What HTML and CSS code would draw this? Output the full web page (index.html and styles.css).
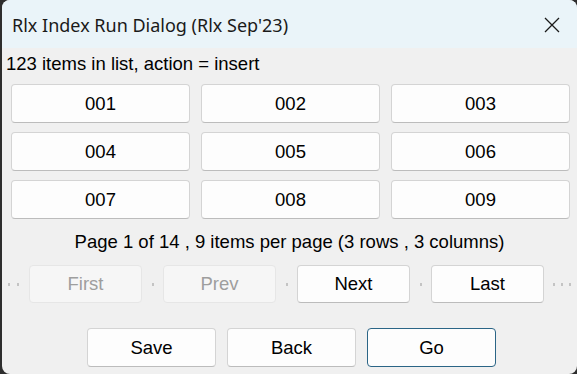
FILE: index.html
```html
<!DOCTYPE html>
<html lang="en">
<head>
    <meta charset="UTF-8">
    <meta name="viewport" content="width=device-width, initial-scale=1.0">
    <title>Rlx Index Run Dialog</title>
    <link rel="stylesheet" href="styles.css">
</head>
<body>

    <div class="window">
        <div class="titlebar">
            <h4>Rlx Index Run Dialog (Rlx Sep'23)</h4>
            <button class="close">
                <svg width="16" height="16" viewBox="0 0 16 16"><path d="M1 1 L15 15 M15 1 L1 15" stroke="#1a1a1a" stroke-width="1.3" fill="none"/></svg>
            </button>
        </div>
        <div class="content">
            <p class="info">123 items in list, action = insert</p>
            <div class="items">
                <button class="btn">001</button>
                <button class="btn">002</button>
                <button class="btn">003</button>
                <button class="btn">004</button>
                <button class="btn">005</button>
                <button class="btn">006</button>
                <button class="btn">007</button>
                <button class="btn">008</button>
                <button class="btn">009</button>
            </div>
            <p class="paging">Page 1 of 14 , 9 items per page (3 rows , 3 columns)</p>
            <div class="nav">
                <span class="dots lead"><i></i><i></i></span>
                <button class="btn nav-btn" disabled>First</button>
                <span class="dots"><i></i></span>
                <button class="btn nav-btn" disabled>Prev</button>
                <span class="dots"><i></i></span>
                <button class="btn nav-btn">Next</button>
                <span class="dots"><i></i></span>
                <button class="btn nav-btn">Last</button>
                <span class="dots trail"><i></i><i></i><i></i></span>
            </div>
            <div class="actions">
                <button class="btn act-btn">Save</button>
                <button class="btn act-btn">Back</button>
                <button class="btn act-btn default">Go</button>
            </div>
        </div>
    </div>

</body>
</html>
```

FILE: styles.css
```css
* {
    margin: 0;
    padding: 0;
    box-sizing: border-box;
}

body {
    background: #2e2e2e;
    font-family: 'Liberation Sans', Arial, sans-serif;
    color: #000;
    overflow: hidden;
}

.window {
    margin-left: 2px;
    width: 575px;
    height: 374px;
    background: #f0f0f0;
    border-radius: 8px;
    overflow: hidden;
}

.titlebar {
    height: 48px;
    background: #eaf4f9;
    display: flex;
    align-items: center;
    justify-content: space-between;
    padding: 0 14px 0 10px;
}

.titlebar h4 {
    font-family: 'Noto Sans', sans-serif;
    font-weight: normal;
    font-size: 18px;
    color: #1a1a1a;
    margin-top: 1px;
}

.close {
    border: 0;
    background: transparent;
    width: 22px;
    height: 22px;
    display: flex;
    align-items: center;
    justify-content: center;
    margin-top: 1px;
}

.content {
    padding: 0 8px 0 4px;
}

.info {
    font-size: 18.5px;
    line-height: 21px;
    margin-top: 5px;
}

.btn {
    font-family: 'Liberation Sans', Arial, sans-serif;
    font-size: 18.5px;
    color: #000;
    background: #fdfdfd;
    border: 1px solid #d4d4d4;
    border-bottom-color: #bcbcbc;
    border-radius: 4px;
}

.btn:disabled {
    background: #f6f6f6;
    border-color: #e6e6e6;
    color: #9e9e9e;
}

.items {
    display: grid;
    grid-template-columns: repeat(3, 179px);
    grid-auto-rows: 39px;
    gap: 9px 11px;
    margin: 10px 0 0 5px;
}

.paging {
    font-size: 18.5px;
    line-height: 21px;
    text-align: center;
    margin-top: 12px;
    padding-left: 4px;
}

.nav {
    display: flex;
    align-items: center;
    height: 38px;
    margin: 13px -8px 0 -4px;
}

.nav-btn {
    flex: none;
    width: 113px;
    height: 38px;
}

.dots {
    flex: none;
    width: 21px;
    display: flex;
    justify-content: center;
}

.dots i {
    display: block;
    width: 2px;
    height: 3px;
    background: #c4c4c4;
}

.dots.lead {
    width: 27px;
    justify-content: flex-start;
    gap: 7px;
    padding-left: 6px;
}

.dots.trail {
    width: 31px;
    justify-content: flex-start;
    gap: 6px;
    padding-left: 9px;
}

.actions {
    display: flex;
    gap: 11px;
    margin: 25px 0 0 81px;
}

.act-btn {
    width: 129px;
    height: 39px;
}

.act-btn.default {
    border-color: #2b6586;
}
```
